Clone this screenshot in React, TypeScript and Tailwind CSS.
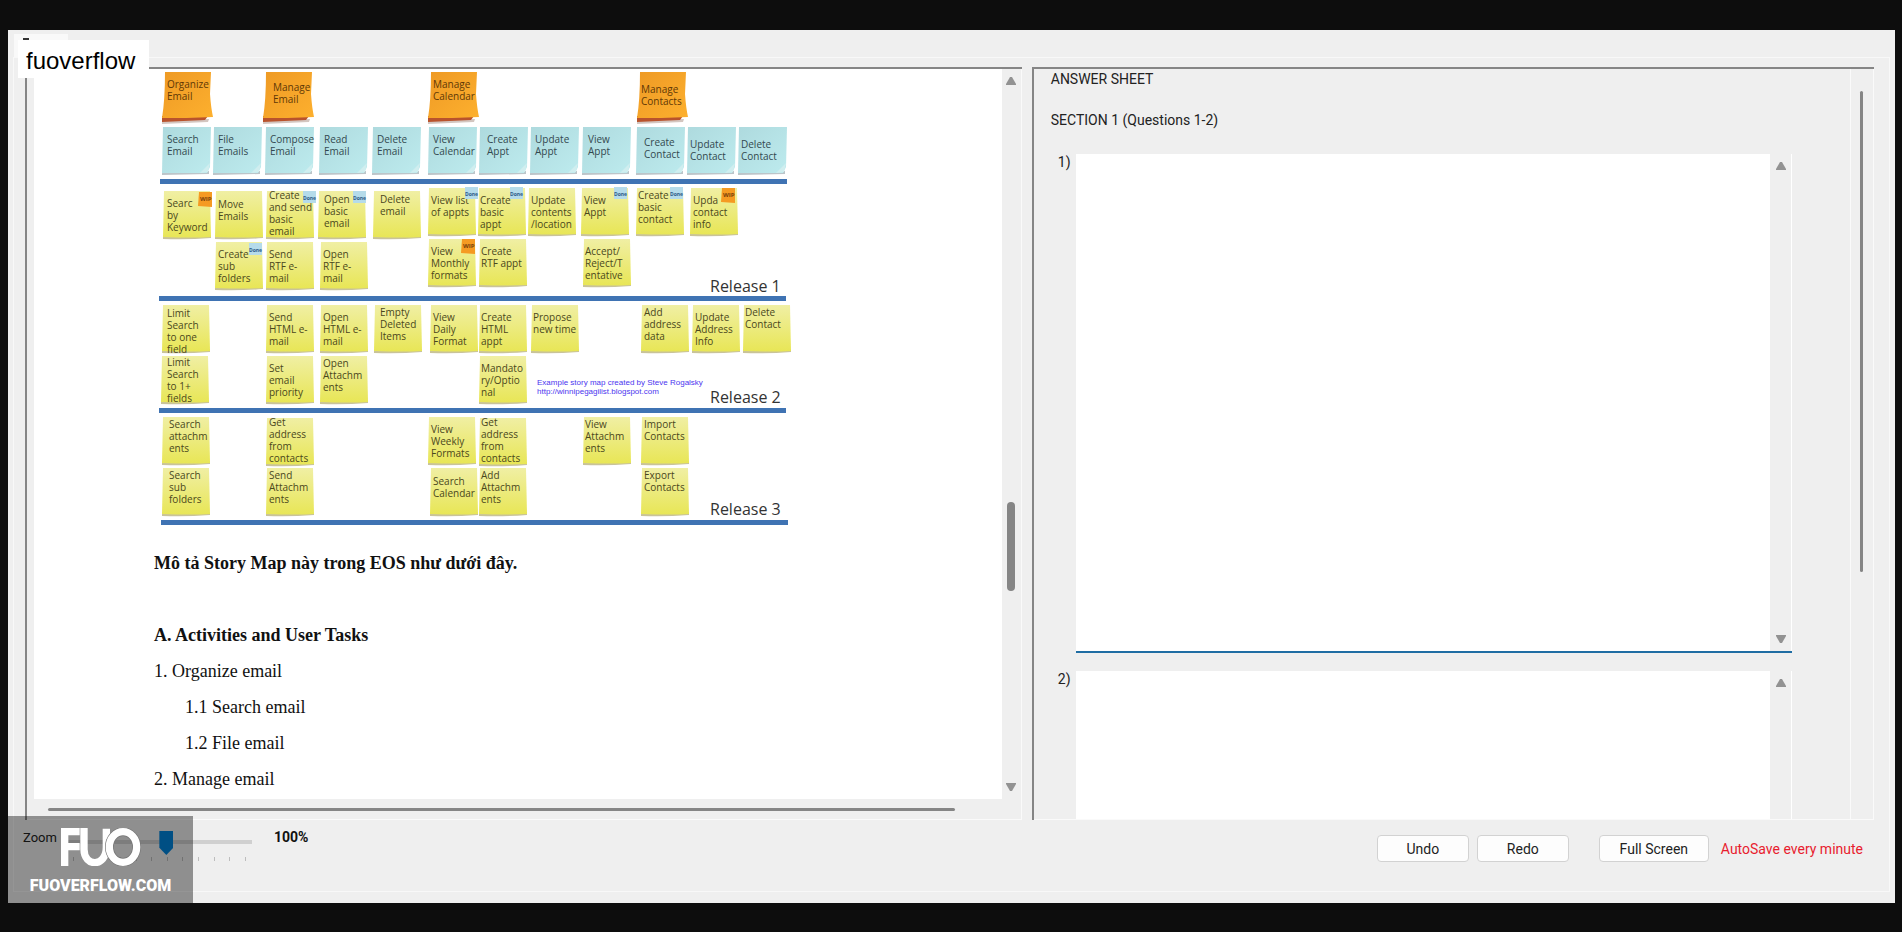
import React from "react";

type Kind = "orange" | "blue" | "yellow";
type Note = [x: number, y: number, tx: number, ty: number, lines: string[]];

const ACTIVITIES: Note[] = [
  [162, 72, 167, 88, ["Organize", "Email"]],
  [263, 72, 273, 91, ["Manage", "Email"]],
  [428, 72, 433, 88, ["Manage", "Calendar"]],
  [637, 72, 641, 93, ["Manage", "Contacts"]],
];

const TASKS: Note[] = [
  [162, 127, 167, 143, ["Search", "Email"]],
  [213, 127, 218, 143, ["File", "Emails"]],
  [265, 127, 270, 143, ["Compose", "Email"]],
  [319, 127, 324, 143, ["Read", "Email"]],
  [372, 127, 377, 143, ["Delete", "Email"]],
  [428, 127, 433, 143, ["View", "Calendar"]],
  [479, 127, 487, 143, ["Create", "Appt"]],
  [530, 127, 535, 143, ["Update", "Appt"]],
  [582, 127, 588, 143, ["View", "Appt"]],
  [636, 127, 644, 146, ["Create", "Contact"]],
  [687, 127, 690, 148, ["Update", "Contact"]],
  [738, 127, 741, 148, ["Delete", "Contact"]],
];

const STORIES: Note[] = [
  [163, 191, 167, 207, ["Searc", "by", "Keyword"]],
  [215, 191, 218, 208, ["Move", "Emails"]],
  [266, 191, 269, 199, ["Create", "and send", "basic", "email"]],
  [318, 191, 324, 203, ["Open", "basic", "email"]],
  [373, 191, 380, 203, ["Delete", "email"]],
  [428, 188, 431, 204, ["View list", "of appts"]],
  [478, 188, 480, 204, ["Create", "basic", "appt"]],
  [528, 188, 531, 204, ["Update", "contents", "/location"]],
  [581, 188, 584, 204, ["View", "Appt"]],
  [636, 188, 638, 199, ["Create", "basic", "contact"]],
  [690, 188, 693, 204, ["Upda", "contact", "info"]],

  [215, 242, 218, 258, ["Create", "sub", "folders"]],
  [266, 242, 269, 258, ["Send", "RTF e-", "mail"]],
  [320, 242, 323, 258, ["Open", "RTF e-", "mail"]],
  [428, 239, 431, 255, ["View", "Monthly", "formats"]],
  [479, 239, 481, 255, ["Create", "RTF appt"]],
  [583, 239, 585, 255, ["Accept/", "Reject/T", "entative"]],

  [162, 305, 167, 317, ["Limit", "Search", "to one", "field"]],
  [266, 305, 269, 321, ["Send", "HTML e-", "mail"]],
  [320, 305, 323, 321, ["Open", "HTML e-", "mail"]],
  [374, 305, 380, 316, ["Empty", "Deleted", "Items"]],
  [430, 305, 433, 321, ["View", "Daily", "Format"]],
  [479, 305, 481, 321, ["Create", "HTML", "appt"]],
  [531, 305, 533, 321, ["Propose", "new time"]],
  [641, 305, 644, 316, ["Add", "address", "data"]],
  [692, 305, 695, 321, ["Update", "Address", "Info"]],
  [743, 305, 745, 316, ["Delete", "Contact"]],

  [161, 356, 167, 366, ["Limit", "Search", "to 1+", "fields"]],
  [266, 356, 269, 372, ["Set", "email", "priority"]],
  [320, 356, 323, 367, ["Open", "Attachm", "ents"]],
  [479, 356, 481, 372, ["Mandato", "ry/Optio", "nal"]],

  [162, 417, 169, 428, ["Search", "attachm", "ents"]],
  [266, 418, 269, 426, ["Get", "address", "from", "contacts"]],
  [428, 417, 431, 433, ["View", "Weekly", "Formats"]],
  [479, 418, 481, 426, ["Get", "address", "from", "contacts"]],
  [583, 417, 585, 428, ["View", "Attachm", "ents"]],
  [641, 417, 644, 428, ["Import", "Contacts"]],

  [162, 468, 169, 479, ["Search", "sub", "folders"]],
  [266, 468, 269, 479, ["Send", "Attachm", "ents"]],
  [430, 468, 433, 485, ["Search", "Calendar"]],
  [479, 468, 481, 479, ["Add", "Attachm", "ents"]],
  [641, 468, 644, 479, ["Export", "Contacts"]],
];

const DONE: [number, number][] = [
  [303, 191], [353, 191], [465, 187], [510, 187], [614, 187], [670, 187], [249, 243],
];
const WIP: [number, number][] = [[198, 192], [721, 188], [461, 239]];
const LINES = [[160, 179], [159, 296], [159, 408], [161, 520]];

function Sticky({ note, kind }: { note: Note; kind: Kind }) {
  const [x, y, tx, ty, lines] = note;
  return (
    <g>
      {kind === "orange" && (
        <>
          <path d={`M${x} ${y + 49} L${x + 47} ${y + 47} L${x + 46} ${y + 50} L${x} ${y + 52}Z`} fill="#d3c6c0" />
          <path d={`M${x} ${y + 44} H${x + 46} L${x + 43} ${y + 48} L${x} ${y + 50}Z`} fill="#b9532c" />
          <path d={`M${x + 3} ${y} H${x + 49} L${x + 48} ${y + 22} Q${x + 49} ${y + 36} ${x + 51} ${y + 45} L${x + 24} ${y + 46} L${x} ${y + 46} Q${x + 3} ${y + 28} ${x + 3} ${y}Z`} fill="url(#orange)" />
        </>
      )}
      {kind === "blue" && (
        <>
          <path d={`M${x} ${y + 44} H${x + 47} V${y + 47} L${x} ${y + 48}Z`} fill="#bcc5c9" />
          <path d={`M${x + 1} ${y} H${x + 49} L${x + 48} ${y + 40} L${x + 45} ${y + 46} L${x} ${y + 46}Z`} fill="url(#blue)" />
          <path d={`M${x + 48} ${y + 36} L${x + 38} ${y + 46} L${x + 46} ${y + 45}Z`} fill="#d0eeef" />
        </>
      )}
      {kind === "yellow" && (
        <>
          <path d={`M${x} ${y + 44} H${x + 48} V${y + 47} Q${x + 24} ${y + 49} ${x} ${y + 48}Z`} fill="#c9c39a" />
          <path d={`M${x + 1} ${y} H${x + 47} L${x + 48} ${y + 46} Q${x + 30} ${y + 47} ${x} ${y + 46}Z`} fill="url(#yellow)" />
        </>
      )}
      {lines.map((line, i) => (
        <text key={i} x={tx} y={ty + i * 12} fontSize="10" fill={kind === "orange" ? "#5f3806" : kind === "blue" ? "#33494f" : "#4a471c"}>
          {line}
        </text>
      ))}
    </g>
  );
}

function StoryMap() {
  return (
    <svg viewBox="150 69 660 464" className="ml-[116px] block h-[464px] w-[660px] shrink-0 font-['Open_Sans',sans-serif] font-medium" role="img" aria-label="Story map">
      <defs>
        <linearGradient id="orange" x1="0" y1="0" x2="1" y2="1">
          <stop offset="0" stopColor="#ee9a25" />
          <stop offset="1" stopColor="#fdb02e" />
        </linearGradient>
        <linearGradient id="blue" x1="0" y1="0" x2="1" y2="1">
          <stop offset="0" stopColor="#aedade" />
          <stop offset="1" stopColor="#bdebee" />
        </linearGradient>
        <linearGradient id="yellow" x1="0" y1="0" x2="0" y2="1">
          <stop offset="0" stopColor="#f0efa4" />
          <stop offset="1" stopColor="#e8e656" />
        </linearGradient>
      </defs>
      {LINES.map(([x, y]) => (
        <rect key={y} x={x} y={y} width="627" height="5" fill="#3f73b3" />
      ))}
      {ACTIVITIES.map((n, i) => <Sticky key={i} note={n} kind="orange" />)}
      {TASKS.map((n, i) => <Sticky key={i} note={n} kind="blue" />)}
      {STORIES.map((n, i) => <Sticky key={i} note={n} kind="yellow" />)}
      {DONE.map(([x, y]) => (
        <g key={`${x}-${y}`}>
          <rect x={x} y={y} width="13" height="12" fill="#b5dbea" />
          <text x={x} y={y + 9} fontSize="5" fontWeight="700" fill="#2d5a86">Done</text>
        </g>
      ))}
      {WIP.map(([x, y]) => (
        <g key={`${x}-${y}`}>
          <path d={`M${x + 1} ${y} H${x + 14} V${y + 15} L${x} ${y + 14}Z`} fill="#f59a22" />
          <text x={x + 2} y={y + 9} fontSize="6" fontWeight="700" fill="#7a430b">WIP</text>
        </g>
      ))}
      <g fontSize="16" fill="#333">
        <text x="710" y="292">Release 1</text>
        <text x="710" y="403">Release 2</text>
        <text x="710" y="515">Release 3</text>
      </g>
      <g fontSize="8" fill="#4b36ef" className="font-['Liberation_Sans',sans-serif]">
        <text x="537" y="385">Example story map created by Steve Rogalsky</text>
        <text x="537" y="394">http://winnipegagilist.blogspot.com</text>
      </g>
    </svg>
  );
}

function Arrow({ down = false }: { down?: boolean }) {
  return (
    <svg viewBox="0 0 10 8" className="h-2 w-2.5 shrink-0 fill-[#929292]" aria-hidden="true">
      {down ? <path d="M0 0H10V1L6 8H4L0 1Z" /> : <path d="M4 0H6L10 7V8H0V7Z" />}
    </svg>
  );
}

function Viewer() {
  return (
    <section className="flex min-w-0 flex-[998] flex-col border-t-2 border-l-2 border-[#858585]">
      <div className="flex flex-1 border-r border-[#fafafa]">
        <article className="ml-[7px] min-w-0 flex-1 overflow-hidden bg-white font-['Liberation_Serif',serif] text-lg leading-9 text-[#111]">
          <StoryMap />
          <div className="pt-3 pl-[120px]">
            <p className="mb-9 font-bold">Mô tả Story Map này trong EOS như dưới đây.</p>
            <h2 className="font-bold">A. Activities and User Tasks</h2>
            <p>1. Organize email</p>
            <p className="pl-[31px]">1.1 Search email</p>
            <p className="pl-[31px]">1.2 File email</p>
            <p>2. Manage email</p>
          </div>
        </article>
        <div className="flex w-[19px] shrink-0 flex-col items-center py-2">
          <Arrow />
          <div className="mt-[417px] h-[89px] w-2 rounded-full bg-[#858585]" />
          <div className="flex-1" />
          <Arrow down />
        </div>
      </div>
      <div className="flex h-[21px] items-center border-r border-b border-[#fafafa] pr-[66px] pl-[21px]">
        <div className="h-[3px] flex-1 rounded-full bg-[#858585]" />
      </div>
    </section>
  );
}

function Answer({ id, active = false }: { id: number; active?: boolean }) {
  return (
    <div className={active ? "flex h-[499px]" : "flex min-h-[140px] flex-1"}>
      <label htmlFor={`answer-${id}`} className="w-[42px] shrink-0 pl-6">{id})</label>
      <div className={active ? "mr-[58px] flex min-w-0 flex-1 border-b-2 border-[#1f6da3]" : "mr-[58px] flex min-w-0 flex-1"}>
        <textarea id={`answer-${id}`} className="min-w-0 flex-1 resize-none overflow-hidden bg-white p-1 outline-none" />
        <div className="flex w-[22px] shrink-0 flex-col items-center justify-between border-r border-white py-2">
          <Arrow />
          {active && <Arrow down />}
        </div>
      </div>
    </div>
  );
}

function AnswerSheet() {
  return (
    <section className="flex min-w-0 flex-[843] border-t-2 border-l-2 border-[#858585] text-[#222]">
      <div className="flex min-w-0 flex-1 flex-col border-b border-[#fafafa] pt-0.5">
        <h1 className="pl-[17px]">ANSWER SHEET</h1>
        <h2 className="mt-[25px] mb-[26px] pl-[17px]">SECTION 1 (Questions 1-2)</h2>
        <Answer id={1} active />
        <div className="h-[18px]" />
        <Answer id={2} />
      </div>
      <div className="w-6 shrink-0 border-r border-b border-l border-[#fafafa]">
        <div className="mt-[22px] ml-[9px] h-[481px] w-[3px] rounded-full bg-[#858585]" />
      </div>
    </section>
  );
}

function Watermark() {
  return (
    <div className="pointer-events-none absolute bottom-0 left-0 flex h-[87px] w-[185px] flex-col items-center bg-black/40 pt-3">
      <svg viewBox="0 0 240 114" className="h-[38px] w-20" aria-hidden="true" fill="none" stroke="#fff" strokeWidth="22">
        <path d="M11 114V11H56M11 56H56" />
        <path d="M69 0V64C69 118 136 118 136 58V2" />
        <ellipse cx="186" cy="57" rx="41" ry="46" stroke="#777" strokeWidth="26" />
        <ellipse cx="186" cy="57" rx="41" ry="46" />
      </svg>
      <span className="mt-3 text-base leading-4 font-black text-white">FUOVERFLOW.COM</span>
    </div>
  );
}

const BUTTON =
  "h-[27px] rounded border border-[#d2d2d2] bg-[#fdfdfd] text-center text-[#222]";

export default function App() {
  return (
    <div className="flex min-h-screen flex-col bg-[#0d0d0d] pt-[30px] pr-[7px] pb-[29px] pl-2 font-['Roboto',sans-serif] text-sm leading-4">
      <main className="relative flex flex-1 flex-col bg-[#efefef] px-[5px] pt-1 pb-[11px]">
        <div className="ml-px h-[23px] w-[54px] bg-[#f9f9f9] pt-1 pl-[9px]">
          <div className="h-0.5 w-[6px] bg-[#333]" />
        </div>
        <div className="flex flex-1 flex-col border border-[#f8f8f8] pt-[9px]">
          <div className="flex flex-1 gap-2.5 pr-[15px] pl-[11px]">
            <Viewer />
            <AnswerSheet />
          </div>
          <footer className="flex h-[71px] items-start pr-[26px] pl-[9px]">
            <label htmlFor="zoom" className="mt-[10px] w-[44px] text-[13px] text-[#222]">Zoom</label>
            <div className="mt-[11px] w-[185px]">
              <input
                id="zoom"
                type="range"
                min={0}
                max={100}
                defaultValue={54}
                className="block h-6 w-full appearance-none bg-[linear-gradient(#d0d0d0,#d0d0d0)] bg-[length:100%_4px] bg-[position:0_9px] bg-no-repeat [&::-webkit-slider-thumb]:h-6 [&::-webkit-slider-thumb]:w-3.5 [&::-webkit-slider-thumb]:appearance-none [&::-webkit-slider-thumb]:bg-[#0084dc] [&::-webkit-slider-thumb]:[clip-path:polygon(0_0,100%_0,100%_70%,50%_100%,0_70%)]"
              />
              <div className="flex justify-between pt-0.5 pr-1.5 pl-1.5">
                {Array.from({ length: 12 }, (_, i) => (
                  <span key={i} className="h-1 w-px bg-[#bdbdbd]" />
                ))}
              </div>
            </div>
            <output htmlFor="zoom" className="mt-[9px] ml-[22px] font-bold text-[#111]">100%</output>
            <div className="ml-auto flex items-center pt-[15px]">
              <button type="button" className={`${BUTTON} w-[92px]`}>Undo</button>
              <button type="button" className={`${BUTTON} ml-2 w-[92px]`}>Redo</button>
              <button type="button" className={`${BUTTON} ml-[30px] w-[110px]`}>Full Screen</button>
              <span className="ml-3 text-[#e81c2e]">AutoSave every minute</span>
            </div>
          </footer>
        </div>
        <div className="absolute top-[10px] left-[10px] flex h-[38px] w-[131px] items-center bg-white pt-1 pl-2 font-['Liberation_Sans',sans-serif] text-2xl text-black">
          fuoverflow
        </div>
        <Watermark />
      </main>
    </div>
  );
}
